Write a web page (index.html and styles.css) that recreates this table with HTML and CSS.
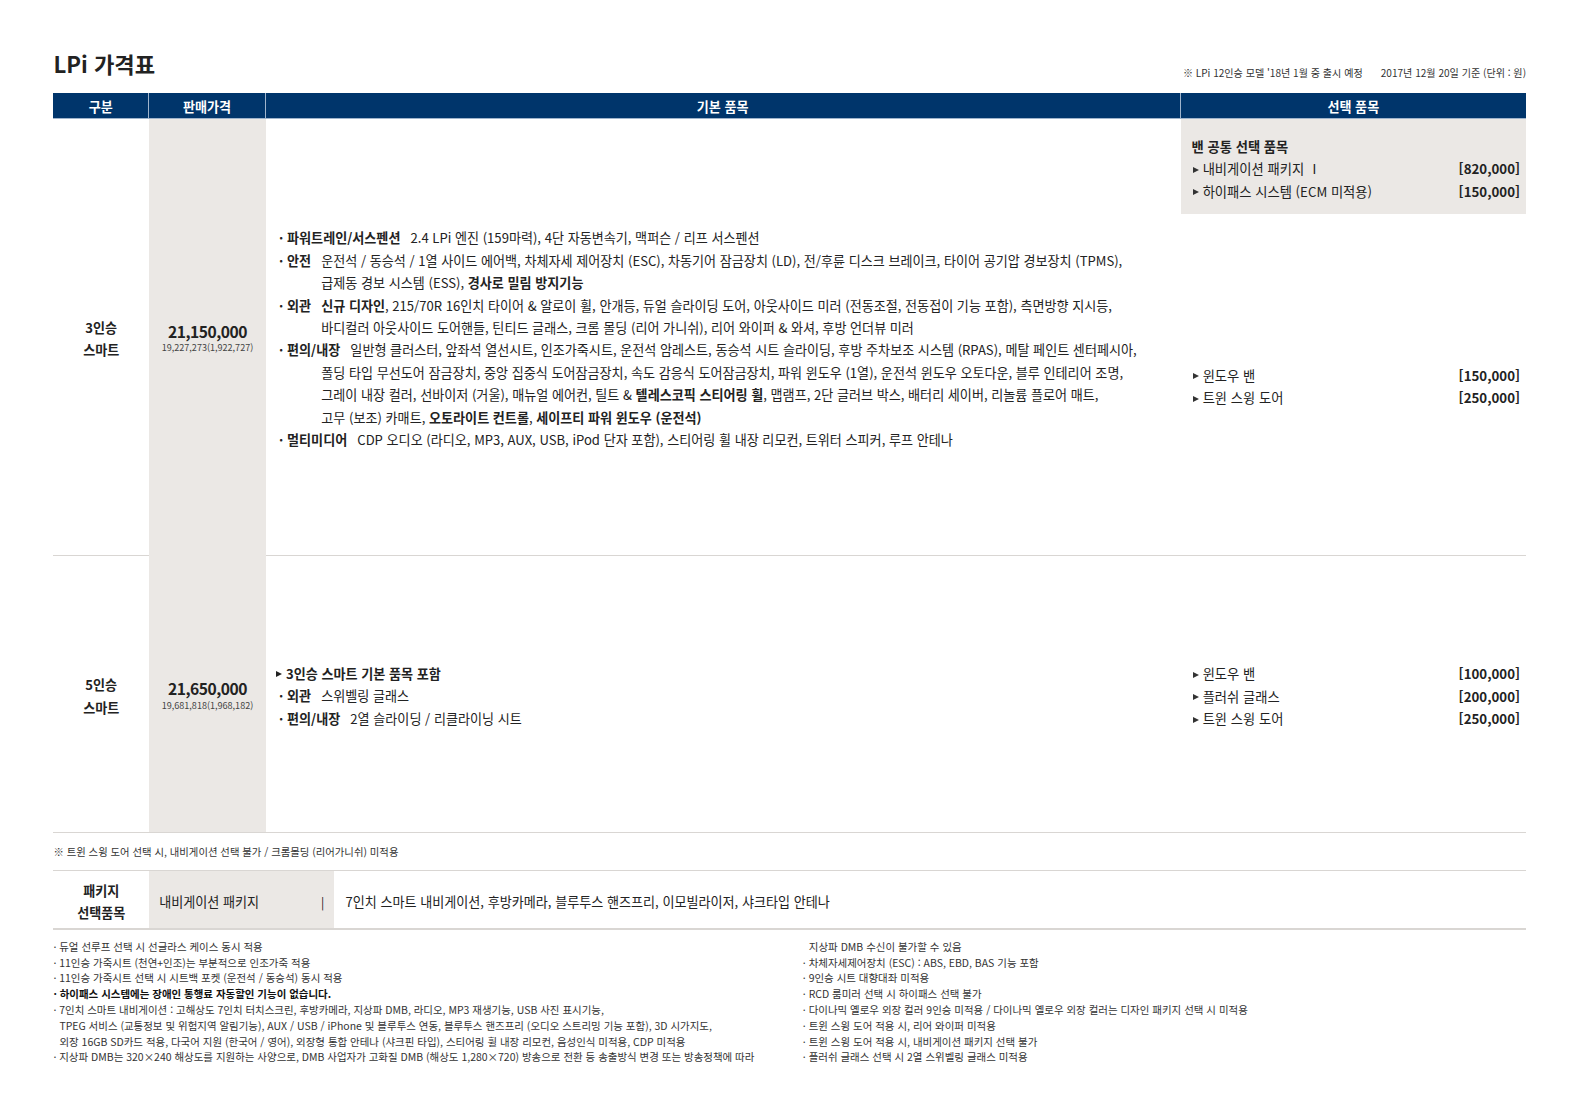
FILE: index.html
```html
<!DOCTYPE html>
<html lang="ko">
<head>
<meta charset="utf-8">
<title>LPi 가격표</title>
<link rel="stylesheet" href="styles.css">
</head>
<body>
<div class="page">
  <div class="titlebar">
    <h1 class="title">LPi 가격표</h1>
    <div class="topnotes">
      <span>※ LPi 12인승 모델 '18년 1월 중 출시 예정</span>
      <span>2017년 12월 20일 기준 (단위 : 원)</span>
    </div>
  </div>

  <div class="table">
    <div class="th">구분</div>
    <div class="th">판매가격</div>
    <div class="th">기본 품목</div>
    <div class="th last">선택 품목</div>

    <!-- row 1 -->
    <div class="cell label r1">3인승<br>스마트</div>
    <div class="cell price r1">
      <div class="amount">21,150,000</div>
      <div class="sub">19,227,273(1,922,727)</div>
    </div>
    <div class="cell basic r1">
      <div class="item"><span class="dot">·</span><b>파워트레인/서스펜션</b><span class="gap"></span>2.4 LPi 엔진 (159마력), 4단 자동변속기, 맥퍼슨 / 리프 서스펜션</div>
      <div class="item"><span class="dot">·</span><b>안전</b><span class="gap"></span>운전석 / 동승석 / 1열 사이드 에어백, 차체자세 제어장치 (ESC), 차동기어 잠금장치 (LD), 전/후륜 디스크 브레이크, 타이어 공기압 경보장치 (TPMS),<br>급제동 경보 시스템 (ESS), <b>경사로 밀림 방지기능</b></div>
      <div class="item"><span class="dot">·</span><b>외관</b><span class="gap"></span><b>신규 디자인</b>, 215/70R 16인치 타이어 &amp; 알로이 휠, 안개등, 듀얼 슬라이딩 도어, 아웃사이드 미러 (전동조절, 전동접이 기능 포함), 측면방향 지시등,<br>바디컬러 아웃사이드 도어핸들, 틴티드 글래스, 크롬 몰딩 (리어 가니쉬), 리어 와이퍼 &amp; 와셔, 후방 언더뷰 미러</div>
      <div class="item"><span class="dot">·</span><b>편의/내장</b><span class="gap"></span>일반형 클러스터, 앞좌석 열선시트, 인조가죽시트, 운전석 암레스트, 동승석 시트 슬라이딩, 후방 주차보조 시스템 (RPAS), 메탈 페인트 센터페시아,<br>폴딩 타입 무선도어 잠금장치, 중앙 집중식 도어잠금장치, 속도 감응식 도어잠금장치, 파워 윈도우 (1열), 운전석 윈도우 오토다운, 블루 인테리어 조명,<br>그레이 내장 컬러, 선바이저 (거울), 매뉴얼 에어컨, 틸트 &amp; <b>텔레스코픽 스티어링 휠</b>, 맵램프, 2단 글러브 박스, 배터리 세이버, 리놀륨 플로어 매트,<br>고무 (보조) 카매트, <b>오토라이트 컨트롤</b>, <b>세이프티 파워 윈도우 (운전석)</b></div>
      <div class="item"><span class="dot">·</span><b>멀티미디어</b><span class="gap"></span>CDP 오디오 (라디오, MP3, AUX, USB, iPod 단자 포함), 스티어링 휠 내장 리모컨, 트위터 스피커, 루프 안테나</div>
    </div>
    <div class="cell option r1">
      <div class="common">
        <div class="common-title">밴 공통 선택 품목</div>
        <div class="opt"><span class="name"><span class="tri"></span>내비게이션 패키지 Ⅰ</span><span class="cost">[820,000]</span></div>
        <div class="opt"><span class="name"><span class="tri"></span>하이패스 시스템 (ECM 미적용)</span><span class="cost">[150,000]</span></div>
      </div>
      <div class="optlist">
        <div class="opt"><span class="name"><span class="tri"></span>윈도우 밴</span><span class="cost">[150,000]</span></div>
        <div class="opt"><span class="name"><span class="tri"></span>트윈 스윙 도어</span><span class="cost">[250,000]</span></div>
      </div>
    </div>

    <!-- row 2 -->
    <div class="cell label r2">5인승<br>스마트</div>
    <div class="cell price r2">
      <div class="amount">21,650,000</div>
      <div class="sub">19,681,818(1,968,182)</div>
    </div>
    <div class="cell basic r2">
      <div class="item"><span class="tri dark"></span><b>3인승 스마트 기본 품목 포함</b></div>
      <div class="item"><span class="dot">·</span><b>외관</b><span class="gap"></span>스위벨링 글래스</div>
      <div class="item"><span class="dot">·</span><b>편의/내장</b><span class="gap"></span>2열 슬라이딩 / 리클라이닝 시트</div>
    </div>
    <div class="cell option r2">
      <div class="optlist">
        <div class="opt"><span class="name"><span class="tri"></span>윈도우 밴</span><span class="cost">[100,000]</span></div>
        <div class="opt"><span class="name"><span class="tri"></span>플러쉬 글래스</span><span class="cost">[200,000]</span></div>
        <div class="opt"><span class="name"><span class="tri"></span>트윈 스윙 도어</span><span class="cost">[250,000]</span></div>
      </div>
    </div>
  </div>

  <div class="note">※ 트윈 스윙 도어 선택 시, 내비게이션 선택 불가 / 크롬몰딩 (리어가니쉬) 미적용</div>

  <div class="package">
    <div class="pk-label">패키지<br>선택품목</div>
    <div class="pk-name"><span>내비게이션 패키지</span><span class="bar">|</span></div>
    <div class="pk-desc">7인치 스마트 내비게이션, 후방카메라, 블루투스 핸즈프리, 이모빌라이저, 샤크타입 안테나</div>
  </div>

  <div class="footnotes">
    <ul class="fn-col">
      <li>· 듀얼 선루프 선택 시 선글라스 케이스 동시 적용</li>
      <li>· 11인승 가죽시트 (천연+인조)는 부분적으로 인조가죽 적용</li>
      <li>· 11인승 가죽시트 선택 시 시트백 포켓 (운전석 / 동승석) 동시 적용</li>
      <li class="strong">· 하이패스 시스템에는 장애인 통행료 자동할인 기능이 없습니다.</li>
      <li>· 7인치 스마트 내비게이션 : 고해상도 7인치 터치스크린, 후방카메라, 지상파 DMB, 라디오, MP3 재생기능, USB 사진 표시기능,</li>
      <li class="cont">TPEG 서비스 (교통정보 및 위험지역 알림기능), AUX / USB / iPhone 및 블루투스 연동, 블루투스 핸즈프리 (오디오 스트리밍 기능 포함), 3D 시가지도,</li>
      <li class="cont">외장 16GB SD카드 적용, 다국어 지원 (한국어 / 영어), 외장형 통합 안테나 (샤크핀 타입), 스티어링 휠 내장 리모컨, 음성인식 미적용, CDP 미적용</li>
      <li>· 지상파 DMB는 320×240 해상도를 지원하는 사양으로, DMB 사업자가 고화질 DMB (해상도 1,280×720) 방송으로 전환 등 송출방식 변경 또는 방송정책에 따라</li>
    </ul>
    <ul class="fn-col">
      <li class="cont">지상파 DMB 수신이 불가할 수 있음</li>
      <li>· 차체자세제어장치 (ESC) : ABS, EBD, BAS 기능 포함</li>
      <li>· 9인승 시트 대향대좌 미적용</li>
      <li>· RCD 룸미러 선택 시 하이패스 선택 불가</li>
      <li>· 다이나믹 옐로우 외장 컬러 9인승 미적용 / 다이나믹 옐로우 외장 컬러는 디자인 패키지 선택 시 미적용</li>
      <li>· 트윈 스윙 도어 적용 시, 리어 와이퍼 미적용</li>
      <li>· 트윈 스윙 도어 적용 시, 내비게이션 패키지 선택 불가</li>
      <li>· 플러쉬 글래스 선택 시 2열 스위벨링 글래스 미적용</li>
    </ul>
  </div>
</div>
</body>
</html>
```

FILE: styles.css
```css
* { box-sizing: border-box; }
html, body { margin: 0; padding: 0; background: #fff; overflow: hidden; }
body {
  font-family: "Noto Sans CJK KR", "Noto Sans", sans-serif;
  color: #222;
}
.page {
  width: 1515px;
  padding: 44px 0 0 53px;
  zoom: 1.0073;
}
.titlebar {
  display: flex;
  justify-content: space-between;
  align-items: flex-end;
  height: 48px;
  padding-bottom: 12px;
}
.title {
  margin: 0 0 2px 0;
  font-size: 22px;
  font-weight: 700;
  line-height: 30px;
  color: #222;
}
.topnotes {
  display: flex;
  gap: 18px;
  font-size: 10px;
  line-height: 14px;
  color: #333;
}
.table {
  display: grid;
  grid-template-columns: 95px 116px 908px 343px;
  grid-template-rows: 26px 434px 275px;
}
.th {
  background: #00356b;
  color: #fff;
  font-size: 13px;
  font-weight: 700;
  display: flex;
  align-items: center;
  justify-content: center;
  padding-top: 3px;
  border-right: 1px solid #9fb4cc;
  border-bottom: 1px solid #9fb4cc;
}
.th.last { border-right: none; }
.cell {
  border-bottom: 1px solid #d9d6d3;
  font-size: 13px;
}
.label {
  display: flex;
  align-items: center;
  justify-content: center;
  text-align: center;
  font-weight: 700;
  line-height: 22px;
  padding-top: 5px;
}
.price {
  background: #ebe8e5;
  display: flex;
  flex-direction: column;
  align-items: center;
  justify-content: center;
  border-bottom-color: #ebe8e5;
  padding-top: 1px;
}
.price.r2 { border-bottom-color: #d9d6d3; }
.amount {
  font-size: 15.5px;
  font-weight: 700;
  line-height: 20px;
  letter-spacing: -0.5px;
}
.sub {
  font-size: 9px;
  line-height: 12px;
  color: #444;
}
.basic {
  display: flex;
  flex-direction: column;
  justify-content: center;
  padding-left: 9px;
  padding-top: 5px;
  line-height: 22.3px;
  white-space: nowrap;
}
.basic b { font-weight: 700; }
.item {
  padding-left: 46px;
  text-indent: -46px;
}
.dot {
  display: inline-block;
  width: 12px;
  text-indent: 0;
  text-align: center;
  font-weight: 700;
}
.gap { display: inline-block; width: 10px; }
.tri {
  display: inline-block;
  width: 0;
  height: 0;
  border-left: 6px solid #333;
  border-top: 3.5px solid transparent;
  border-bottom: 3.5px solid transparent;
  margin: 0 4px 2px 1px;
  vertical-align: middle;
  text-indent: 0;
}
.tri.dark { border-left-color: #222; }
.option {
  display: flex;
  flex-direction: column;
  font-size: 13.2px;
  line-height: 22.3px;
}
.common {
  background: #ebe8e5;
  height: 94px;
  padding: 17px 6px 0 11px;
}
.common-title { font-weight: 700; }
.optlist {
  flex: 1;
  display: flex;
  flex-direction: column;
  justify-content: center;
  padding: 6px 6px 0 11px;
}
.opt {
  display: flex;
  justify-content: space-between;
}
.cost { font-weight: 700; }
.note {
  height: 38px;
  display: flex;
  align-items: center;
  font-size: 10.3px;
  color: #333;
  border-bottom: 1px solid #d9d6d3;
  width: 1462px;
}
.package {
  display: grid;
  grid-template-columns: 95px 184px 1fr;
  height: 58px;
  width: 1462px;
  border-bottom: 2px solid #d9d6d3;
  font-size: 13px;
}
.pk-label {
  display: flex;
  align-items: center;
  justify-content: center;
  text-align: center;
  font-weight: 700;
  line-height: 22px;
  padding-top: 5px;
}
.pk-name {
  background: #ebe8e5;
  display: flex;
  align-items: center;
  justify-content: space-between;
  padding: 4px 10px 0 10px;
}
.bar { font-size: 12px; }
.pk-desc {
  display: flex;
  align-items: center;
  padding: 4px 0 0 11px;
}
.footnotes {
  display: grid;
  grid-template-columns: 744px 1fr;
  width: 1462px;
  padding-top: 9px;
}
.fn-col {
  list-style: none;
  margin: 0;
  padding: 0;
  font-size: 10.4px;
  line-height: 15.7px;
  color: #333;
  white-space: nowrap;
}
.fn-col li.strong { font-weight: 700; color: #111; }
.fn-col li.cont { padding-left: 6px; }
```
